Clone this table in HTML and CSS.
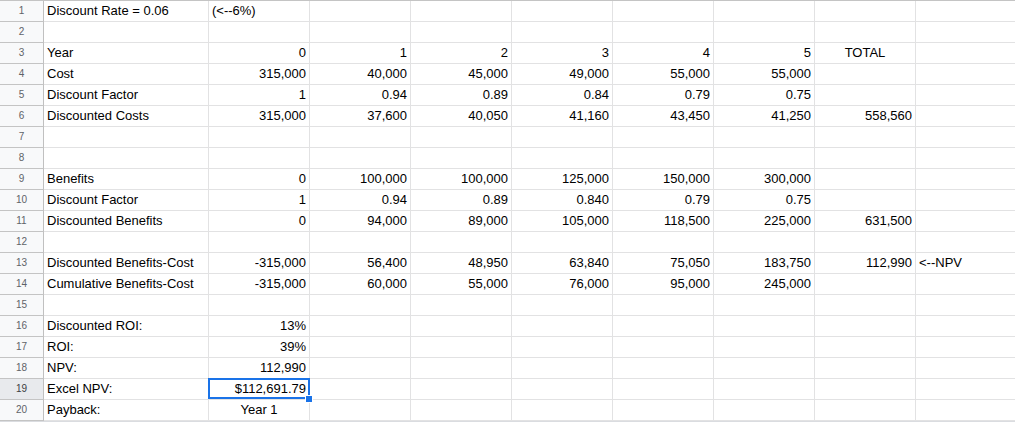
FILE: index.html
```html
<!DOCTYPE html>
<html>
<head>
<meta charset="utf-8">
<link rel="stylesheet" href="styles.css">
</head>
<body>
<div class="sheet">
  <div class="row"><div class="rh">1</div><div class="c">Discount Rate = 0.06</div><div class="c">(&lt;--6%)</div><div class="c"></div><div class="c"></div><div class="c"></div><div class="c"></div><div class="c"></div><div class="c"></div><div class="c"></div></div>
  <div class="row"><div class="rh">2</div><div class="c"></div><div class="c"></div><div class="c"></div><div class="c"></div><div class="c"></div><div class="c"></div><div class="c"></div><div class="c"></div><div class="c"></div></div>
  <div class="row"><div class="rh">3</div><div class="c">Year</div><div class="c n">0</div><div class="c n">1</div><div class="c n">2</div><div class="c n">3</div><div class="c n">4</div><div class="c n">5</div><div class="c m">TOTAL</div><div class="c"></div></div>
  <div class="row"><div class="rh">4</div><div class="c">Cost</div><div class="c n">315,000</div><div class="c n">40,000</div><div class="c n">45,000</div><div class="c n">49,000</div><div class="c n">55,000</div><div class="c n">55,000</div><div class="c"></div><div class="c"></div></div>
  <div class="row"><div class="rh">5</div><div class="c">Discount Factor</div><div class="c n">1</div><div class="c n">0.94</div><div class="c n">0.89</div><div class="c n">0.84</div><div class="c n">0.79</div><div class="c n">0.75</div><div class="c"></div><div class="c"></div></div>
  <div class="row"><div class="rh">6</div><div class="c">Discounted Costs</div><div class="c n">315,000</div><div class="c n">37,600</div><div class="c n">40,050</div><div class="c n">41,160</div><div class="c n">43,450</div><div class="c n">41,250</div><div class="c n">558,560</div><div class="c"></div></div>
  <div class="row"><div class="rh">7</div><div class="c"></div><div class="c"></div><div class="c"></div><div class="c"></div><div class="c"></div><div class="c"></div><div class="c"></div><div class="c"></div><div class="c"></div></div>
  <div class="row"><div class="rh">8</div><div class="c"></div><div class="c"></div><div class="c"></div><div class="c"></div><div class="c"></div><div class="c"></div><div class="c"></div><div class="c"></div><div class="c"></div></div>
  <div class="row"><div class="rh">9</div><div class="c">Benefits</div><div class="c n">0</div><div class="c n">100,000</div><div class="c n">100,000</div><div class="c n">125,000</div><div class="c n">150,000</div><div class="c n">300,000</div><div class="c"></div><div class="c"></div></div>
  <div class="row"><div class="rh">10</div><div class="c">Discount Factor</div><div class="c n">1</div><div class="c n">0.94</div><div class="c n">0.89</div><div class="c n">0.840</div><div class="c n">0.79</div><div class="c n">0.75</div><div class="c"></div><div class="c"></div></div>
  <div class="row"><div class="rh">11</div><div class="c">Discounted Benefits</div><div class="c n">0</div><div class="c n">94,000</div><div class="c n">89,000</div><div class="c n">105,000</div><div class="c n">118,500</div><div class="c n">225,000</div><div class="c n">631,500</div><div class="c"></div></div>
  <div class="row"><div class="rh">12</div><div class="c"></div><div class="c"></div><div class="c"></div><div class="c"></div><div class="c"></div><div class="c"></div><div class="c"></div><div class="c"></div><div class="c"></div></div>
  <div class="row"><div class="rh">13</div><div class="c">Discounted Benefits-Cost</div><div class="c n">-315,000</div><div class="c n">56,400</div><div class="c n">48,950</div><div class="c n">63,840</div><div class="c n">75,050</div><div class="c n">183,750</div><div class="c n">112,990</div><div class="c">&lt;--NPV</div></div>
  <div class="row"><div class="rh">14</div><div class="c">Cumulative Benefits-Cost</div><div class="c n">-315,000</div><div class="c n">60,000</div><div class="c n">55,000</div><div class="c n">76,000</div><div class="c n">95,000</div><div class="c n">245,000</div><div class="c"></div><div class="c"></div></div>
  <div class="row"><div class="rh">15</div><div class="c"></div><div class="c"></div><div class="c"></div><div class="c"></div><div class="c"></div><div class="c"></div><div class="c"></div><div class="c"></div><div class="c"></div></div>
  <div class="row"><div class="rh">16</div><div class="c">Discounted ROI:</div><div class="c n">13%</div><div class="c"></div><div class="c"></div><div class="c"></div><div class="c"></div><div class="c"></div><div class="c"></div><div class="c"></div></div>
  <div class="row"><div class="rh">17</div><div class="c">ROI:</div><div class="c n">39%</div><div class="c"></div><div class="c"></div><div class="c"></div><div class="c"></div><div class="c"></div><div class="c"></div><div class="c"></div></div>
  <div class="row"><div class="rh">18</div><div class="c">NPV:</div><div class="c n">112,990</div><div class="c"></div><div class="c"></div><div class="c"></div><div class="c"></div><div class="c"></div><div class="c"></div><div class="c"></div></div>
  <div class="row"><div class="rh active">19</div><div class="c">Excel NPV:</div><div class="c n sel">$112,691.79<span class="selbox"></span><span class="handle"></span></div><div class="c"></div><div class="c"></div><div class="c"></div><div class="c"></div><div class="c"></div><div class="c"></div><div class="c"></div></div>
  <div class="row"><div class="rh">20</div><div class="c">Payback:</div><div class="c m">Year 1</div><div class="c"></div><div class="c"></div><div class="c"></div><div class="c"></div><div class="c"></div><div class="c"></div><div class="c"></div></div>
</div>
</body>
</html>
```
FILE: styles.css
```css
html, body {
  margin: 0;
  padding: 0;
  background: #ffffff;
}
body {
  width: 1015px;
  height: 422px;
  overflow: hidden;
  font-family: "Liberation Sans", Arial, sans-serif;
  font-size: 13px;
  color: #000000;
}
.sheet {
  width: 1015px;
  overflow: hidden;
  border-top: 1px solid #c4c4c4;
  border-bottom: 1px solid #dadce0;
}
.row {
  display: grid;
  grid-template-columns: 44px 165px repeat(8, 101px);
  height: 21px;
}
.rh {
  box-sizing: border-box;
  background: #f8f9fa;
  border-right: 1px solid #c0c0c0;
  border-bottom: 1px solid #c4c4c4;
  color: #5f6368;
  font-size: 10px;
  line-height: 20px;
  text-align: center;
}
.rh.active {
  background: #e8eaed;
  color: #3c4043;
}
.c {
  box-sizing: border-box;
  border-right: 1px solid #e2e2e3;
  border-bottom: 1px solid #e2e2e3;
  line-height: 20px;
  padding: 0 3px;
  white-space: nowrap;
  overflow: visible;
}
.n {
  text-align: right;
}
.m {
  text-align: center;
}
.sel {
  position: relative;
}
.selbox {
  position: absolute;
  top: -1px;
  left: -1px;
  right: -1px;
  bottom: 0;
  border: 2px solid #1a73e8;
  box-sizing: border-box;
}
.handle {
  position: absolute;
  right: -4px;
  bottom: -4px;
  width: 6px;
  height: 6px;
  background: #1a73e8;
  border: 1px solid #ffffff;
}
```
